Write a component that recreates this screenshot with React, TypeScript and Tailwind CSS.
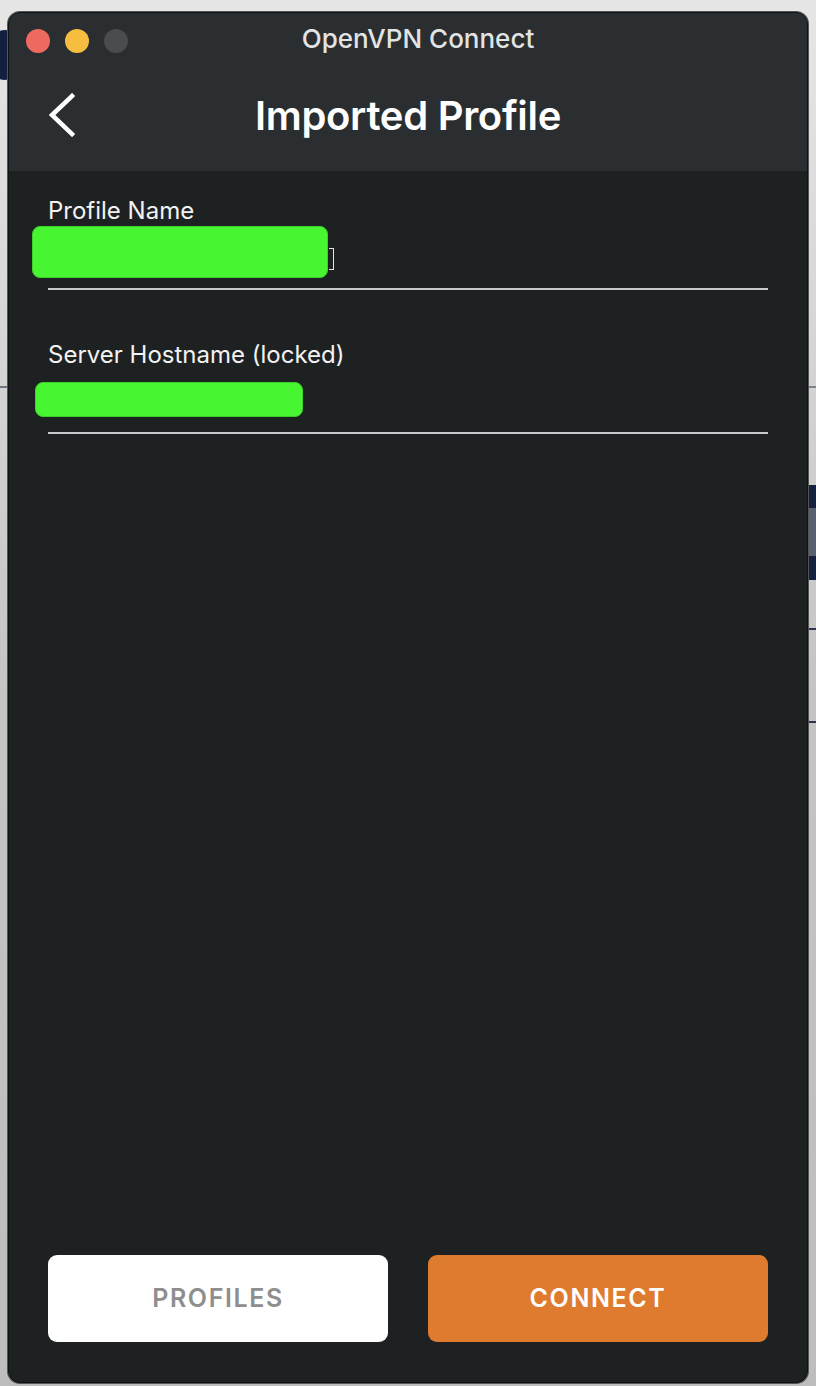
function TrafficLights() {
  return (
    <div className="absolute left-[17px] top-[16px] flex gap-[15px]">
      <span className="h-[24px] w-[24px] rounded-full bg-[#ee6a5f]" />
      <span className="h-[24px] w-[24px] rounded-full bg-[#f6bd41]" />
      <span className="h-[24px] w-[24px] rounded-full bg-[#4a4d4f]" />
    </div>
  );
}

function BackChevron() {
  return (
    <svg
      className="absolute left-[38px] top-[-1px]"
      width="30"
      height="44"
      viewBox="0 0 30 44"
      fill="none"
    >
      <polyline
        points="25,3 5,22 25,41"
        stroke="#ffffff"
        strokeWidth="4.5"
        strokeLinecap="square"
      />
    </svg>
  );
}

export default function App() {
  return (
    <div
      className="relative h-[1386px] w-[816px] overflow-hidden bg-gradient-to-b from-[#e6e6e6] via-[#c4c4c4] to-[#bdbdbd]"
      style={{ fontFamily: "Inter, 'Noto Sans', sans-serif" }}
    >
      {/* background app slivers */}
      <div className="absolute left-[-10px] top-[30px] h-[50px] w-[30px] rounded-full bg-[#14203f]" />
      <div className="absolute left-0 top-[386px] h-[2px] w-[10px] bg-[#6f7787]" />
      <div className="absolute right-0 top-[485px] h-[95px] w-[10px] bg-[#16213f]" />
      <div className="absolute right-0 top-[508px] h-[48px] w-[10px] bg-[#5b6070]" />
      <div className="absolute right-0 top-[386px] h-[2px] w-[10px] bg-[#7b8290]" />
      <div className="absolute right-0 top-[628px] h-[2px] w-[10px] bg-[#2a3350]" />
      <div className="absolute right-0 top-[721px] h-[2px] w-[10px] bg-[#2a3350]" />

      <div className="absolute left-[8px] top-[12px] flex h-[1371px] w-[800px] flex-col overflow-hidden rounded-[12px] border border-[#111] bg-[#1e2122] shadow-[0_0_0_1px_#555]">
        <div className="relative flex h-[158px] shrink-0 flex-col bg-[#2a2e31]">
          <TrafficLights />
          <div className="pl-[20px] pt-[11px] text-center text-[26px] font-medium leading-[30px] text-[#e3e3e3]">
            OpenVPN Connect
          </div>
          <div className="relative mt-[40px] flex h-[44px] items-center justify-center">
            <BackChevron />
            <span className="text-[40px] font-semibold leading-[44px] tracking-[-0.3px] text-white">
              Imported Profile
            </span>
          </div>
        </div>

        <div className="flex flex-1 flex-col px-[39px] pt-[26px]">
          <div className="text-[24px] leading-[28px] text-[#f2f2f2]">Profile Name</div>
          <div className="-ml-[16px] flex h-[63px] items-start">
            <div className="mt-[1px] h-[52px] w-[296px] rounded-[8px] border border-[#3fcf2a] bg-[#47f530]" />
            <span className="ml-[1px] mt-[23px] h-[22px] w-[5px] border border-l-0 border-[#e6e6e6]" />
          </div>
          <div className="h-[2px] bg-[#c9c9c9]" />

          <div className="mt-[51px] text-[24px] leading-[28px] text-[#f2f2f2]">
            Server Hostname (locked)
          </div>
          <div className="-ml-[13px] flex h-[63px] items-start">
            <div className="mt-[13px] h-[35px] w-[268px] rounded-[8px] border border-[#3fcf2a] bg-[#47f530]" />
          </div>
          <div className="h-[2px] bg-[#c9c9c9]" />

          <div className="mt-auto mb-[40px] grid grid-cols-2 gap-[40px]">
            <button className="h-[87px] rounded-[9px] bg-white text-[25px] font-semibold tracking-[1.6px] text-[#8e8e8e]">
              PROFILES
            </button>
            <button className="h-[87px] rounded-[9px] bg-[#df7b2e] text-[25px] font-semibold tracking-[1.6px] text-white">
              CONNECT
            </button>
          </div>
        </div>
      </div>
    </div>
  );
}
